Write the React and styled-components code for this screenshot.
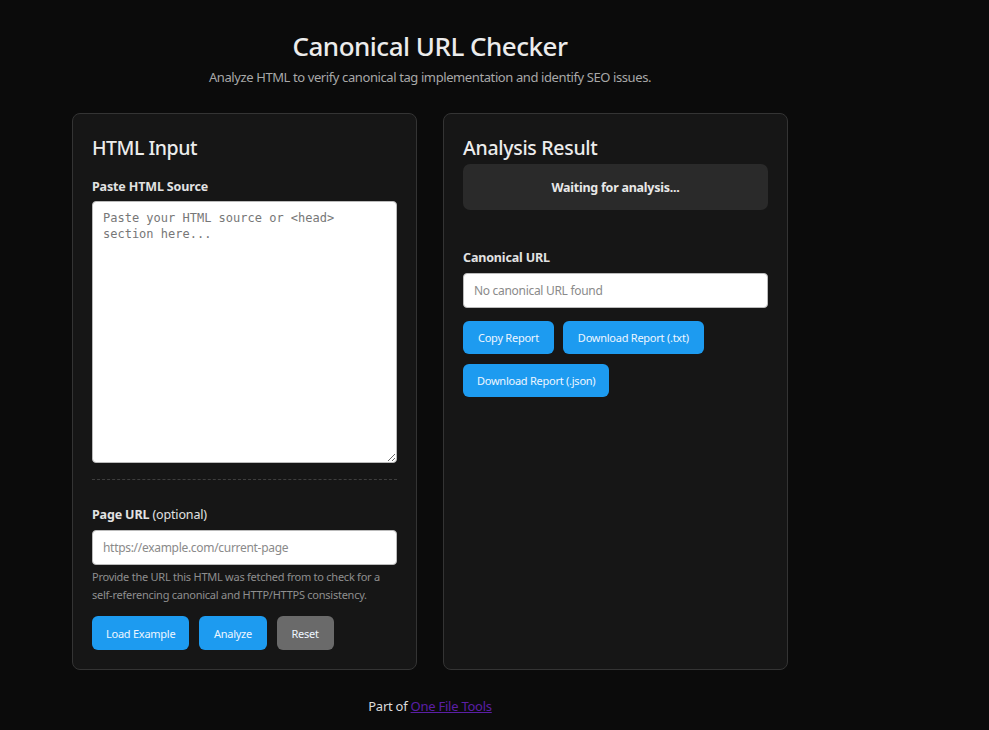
import React from "react";
import styled, { createGlobalStyle } from "styled-components";

const Global = createGlobalStyle`
  html, body { margin: 0; padding: 0; background: #0b0b0b; }
  body { font-family: "Noto Sans", "Open Sans", sans-serif; color: #e6e6e6; }
  * { box-sizing: border-box; }
`;

const Page = styled.div`
  width: 716px;
  margin-left: 72px;
  padding-top: 29px;
  padding-bottom: 14px;
`;

const Header = styled.header`
  text-align: center;
  margin-bottom: 27px;
`;

const Title = styled.h1`
  margin: 0;
  font-size: 26px;
  font-weight: 500;
  line-height: 34px;
  letter-spacing: -0.5px;
  color: #ececec;
`;

const Subtitle = styled.p`
  margin: 5px 0 0;
  font-size: 13px;
  line-height: 18px;
  letter-spacing: -0.4px;
  color: #a8a8a8;
`;

const Grid = styled.div`
  display: grid;
  grid-template-columns: 345px 345px;
  gap: 26px;
`;

const Card = styled.section`
  background: #161616;
  border: 1px solid #343434;
  border-radius: 8px;
  padding: 20px 19px 19px;
  height: 557px;
  display: flex;
  flex-direction: column;
`;

const CardTitle = styled.h2`
  margin: 1px 0 0;
  font-size: 19.5px;
  font-weight: 500;
  line-height: 26px;
  letter-spacing: ${(p) => p.$ls ?? -0.3}px;
  color: #ececec;
`;

const Label = styled.label`
  display: block;
  font-size: 12.5px;
  font-weight: 700;
  line-height: 18px;
  letter-spacing: -0.15px;
  color: #e2e2e2;
  margin-top: ${(p) => p.$mt || 0}px;
  margin-bottom: ${(p) => p.$mb ?? 6}px;
`;

const LabelLight = styled.span`
  font-weight: 400;
`;

const TextArea = styled.textarea`
  display: block;
  flex: none;
  width: 305px;
  height: 262px;
  border: 1px solid #bbb;
  border-radius: 4px;
  background: #fff;
  padding: 8px 10px;
  font-family: "DejaVu Sans Mono", monospace;
  font-size: 12px;
  line-height: 16px;
  color: #222;
  resize: vertical;
  &::placeholder { color: #777; }
`;

const Divider = styled.hr`
  flex: none;
  width: 100%;
  border: 0;
  border-top: 1px dashed #3e3e3e;
  margin: 16px 0 26px;
`;

const Input = styled.input`
  display: block;
  flex: none;
  width: 305px;
  height: 35px;
  border: 1px solid #bbb;
  border-radius: 4px;
  background: #fff;
  padding: 0 10px;
  font-family: inherit;
  font-size: 12px;
  letter-spacing: -0.3px;
  color: #222;
  &::placeholder { color: #8a8a8a; }
`;

const Help = styled.p`
  margin: 3px 0 0;
  font-size: 11px;
  line-height: 18px;
  letter-spacing: -0.25px;
  color: #8e8e8e;
`;

const ButtonRow = styled.div`
  display: flex;
  flex-wrap: wrap;
  gap: 10px ${(p) => p.$gap ?? 10}px;
  margin-top: ${(p) => p.$mt || 0}px;
`;

const Button = styled.button`
  height: ${(p) => p.$h ?? 34}px;
  padding: 0 ${(p) => p.$px ?? 15}px;
  border: 0;
  border-radius: 6px;
  background: ${(p) => (p.$gray ? "#6a6a6a" : "#1d9bf0")};
  color: #eef6ff;
  font-family: inherit;
  font-size: 11px;
  letter-spacing: -0.25px;
  cursor: pointer;
`;

const Status = styled.div`
  margin-top: 3px;
  height: 46px;
  flex: none;
  background: #2a2a2a;
  border-radius: 7px;
  display: flex;
  align-items: center;
  justify-content: center;
  font-size: 12.5px;
  font-weight: 700;
  letter-spacing: -0.25px;
  color: #e8e8e8;
`;

const Footer = styled.footer`
  text-align: center;
  margin-top: 27px;
  font-size: 13px;
  line-height: 18px;
  letter-spacing: -0.25px;
  color: #dcdcdc;
`;

const Link = styled.a`
  color: #5b1fa6;
  text-decoration: underline;
`;

export default function App() {
  return (
    <>
      <Global />
      <Page>
        <Header>
          <Title>Canonical URL Checker</Title>
          <Subtitle>Analyze HTML to verify canonical tag implementation and identify SEO issues.</Subtitle>
        </Header>
        <Grid>
          <Card>
            <CardTitle $ls={-0.5}>HTML Input</CardTitle>
            <Label $mt={17} $mb={5}>Paste HTML Source</Label>
            <TextArea placeholder="Paste your HTML source or <head> section here..." />
            <Divider />
            <Label>
              Page URL <LabelLight>(optional)</LabelLight>
            </Label>
            <Input placeholder="https://example.com/current-page" />
            <Help>
              Provide the URL this HTML was fetched from to check for a self-referencing canonical and HTTP/HTTPS consistency.
            </Help>
            <ButtonRow $mt={12}>
              <Button $px={14}>Load Example</Button>
              <Button $px={14.5}>Analyze</Button>
              <Button $gray>Reset</Button>
            </ButtonRow>
          </Card>
          <Card>
            <CardTitle>Analysis Result</CardTitle>
            <Status>Waiting for analysis...</Status>
            <Label $mt={39}>Canonical URL</Label>
            <Input placeholder="No canonical URL found" readOnly />
            <ButtonRow $mt={13} $gap={9}>
              <Button $h={33}>Copy Report</Button>
              <Button $h={33}>Download Report (.txt)</Button>
              <Button $h={33} $px={14}>Download Report (.json)</Button>
            </ButtonRow>
          </Card>
        </Grid>
        <Footer>
          Part of <Link href="#">One File Tools</Link>
        </Footer>
      </Page>
    </>
  );
}
